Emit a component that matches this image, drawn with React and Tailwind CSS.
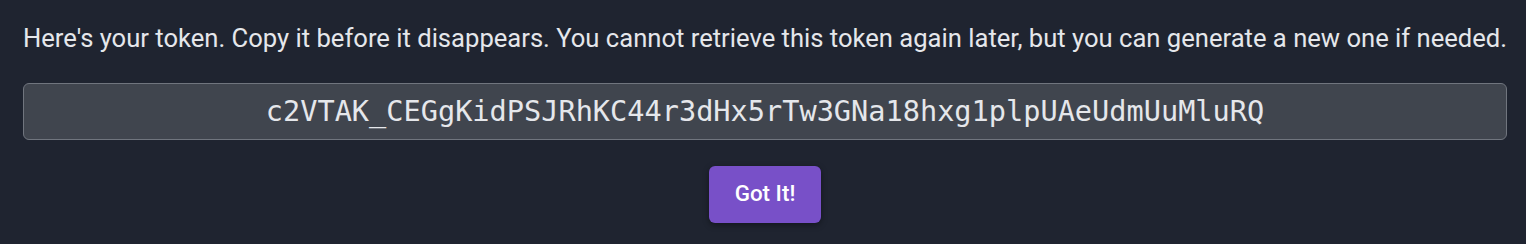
export default function App() {
  return (
    <div className="w-[1526px] h-[244px] bg-[#1f2430] pl-[23px] pr-[19px] pt-[19px] flex flex-col items-center" style={{ fontFamily: "Roboto, sans-serif" }}>
      <p className="w-full text-[25.6px] leading-[38.4px] text-[#e5e7eb] text-center whitespace-nowrap">
        Here's your token. Copy it before it disappears. You cannot retrieve this token again later, but you can generate a new one if needed.
      </p>
      <div className="mt-[25.6px] w-full h-[57px] rounded-[6px] border border-[#70757e] bg-[#40454e] flex items-center justify-center">
        <span className="text-[28.6px] text-[#e5e7eb]" style={{ fontFamily: "'DejaVu Sans Mono', monospace" }}>
          c2VTAK_CEGgKidPSJRhKC44r3dHx5rTw3GNa18hxg1plpUAeUdmUuMluRQ
        </span>
      </div>
      <button className="mt-[25.6px] w-[112px] h-[57px] rounded-[6px] bg-[#7850c8] text-white text-[22.4px] font-medium shadow-[0_2px_6px_rgba(0,0,0,0.4)]">
        Got It!
      </button>
    </div>
  );
}
